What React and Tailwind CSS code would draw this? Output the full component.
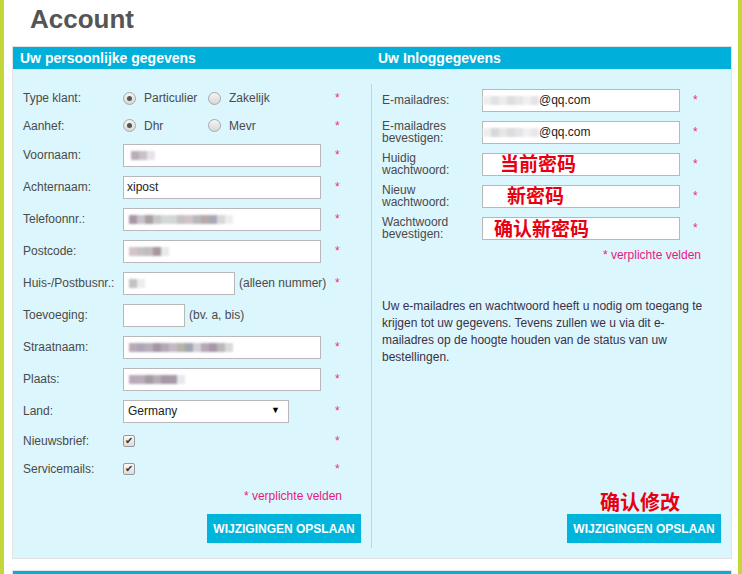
import React from "react";

const font = { fontFamily: '"Liberation Sans", Arial, sans-serif' };
const cjk = { fontFamily: '"Noto Sans CJK SC", "Liberation Sans", sans-serif' };

// pixelated/blurred stand-in for hidden personal data
const Blur = ({ colors, className = "" }) => (
  <div className={"flex items-center blur-[1px] " + className}>
    {colors.map((c, i) => (
      <div key={i} className="w-[8px] h-[9px]" style={{ background: c }} />
    ))}
  </div>
);

const Star = () => <span className="text-[#e8308a] text-[12px] leading-none">*</span>;

const Box = ({ w = "w-[198px]", children }) => (
  <div className={w + " h-[23px] bg-white border border-[#b8b8b8] flex items-center px-[3px] text-[12px] text-[#222]"}>
    {children}
  </div>
);

const Radio = ({ checked, label }) => (
  <div className="w-[85px] flex items-center gap-[8px]">
    <div className="w-[13px] h-[13px] rounded-full border border-[#a8a8a8] bg-gradient-to-b from-[#f4f4f4] to-[#d8d8d8] flex items-center justify-center">
      {checked && <div className="w-[5px] h-[5px] rounded-full bg-[#555]" />}
    </div>
    <span>{label}</span>
  </div>
);

const Check = () => (
  <div className="w-[12px] h-[12px] rounded-[2px] border border-[#999] bg-gradient-to-b from-[#fafafa] to-[#dcdcdc] flex items-center justify-center text-[10px] leading-none text-[#333]">
    ✔
  </div>
);

const Row = ({ label, h = "h-[32px]", star = true, children }) => (
  <div className={"flex items-center shrink-0 " + h}>
    <div className="w-[100px] shrink-0">{label}</div>
    <div className="w-[212px] shrink-0 flex items-center">{children}</div>
    {star && <Star />}
  </div>
);

const RRow = ({ label, children }) => (
  <div className="flex items-center h-[32px] shrink-0">
    <div className="w-[100px] shrink-0 leading-[12px]">{label}</div>
    <div className="w-[211px] shrink-0 flex items-center">{children}</div>
    <Star />
  </div>
);

const Red = ({ children, className = "" }) => (
  <span className={"text-[#e60012] font-bold text-[19px] leading-none whitespace-nowrap " + className} style={cjk}>
    {children}
  </span>
);

const Button = () => (
  <div className="h-[29px] w-[154px] bg-[#00b5dc] text-white font-bold text-[12px] flex items-center justify-center">
    WIJZIGINGEN OPSLAAN
  </div>
);

export default function App() {
  return (
    <div className="w-[742px] h-[574px] bg-white flex overflow-hidden text-[12px] text-[#4a4a4a]" style={font}>
      <div className="w-[4px] bg-[#c3d63a] shrink-0" />
      <div className="flex-1 flex flex-col">
        <div className="h-[46px] shrink-0 pt-[4px] pl-[26px] text-[26px] leading-[30px] font-bold text-[#555]">Account</div>

        <div className="shrink-0 ml-[8px] w-[720px] border border-[#e2e2e2] bg-[#dcf6fd]">
          <div className="h-[22px] bg-[#00b0da] flex items-center text-white font-bold text-[14px]">
            <div className="w-[358px] pl-[7px]">Uw persoonlijke gegevens</div>
            <div className="pl-[7px]">Uw Inloggegevens</div>
          </div>

          <div className="flex h-[489px]">
            {/* left column */}
            <div className="w-[358px] pl-[10px] pr-[10px] pt-[15px] pb-[15px] flex flex-col">
              <Row label="Type klant:" h="h-[28px]">
                <Radio checked label="Particulier" />
                <Radio label="Zakelijk" />
              </Row>
              <Row label="Aanhef:" h="h-[27px]">
                <Radio checked label="Dhr" />
                <Radio label="Mevr" />
              </Row>
              <Row label="Voornaam:">
                <Box>
                  <Blur className="ml-[4px]" colors={["#b9adba", "#c9c1ca", "#e6e3e8"]} />
                </Box>
              </Row>
              <Row label="Achternaam:">
                <Box>xipost</Box>
              </Row>
              <Row label="Telefoonnr.:">
                <Box>
                  <Blur className="ml-[2px]" colors={["#a995a8", "#c9c3c9", "#a89f9f", "#c9c6c9", "#d4d9d6", "#d2d7d4", "#c5c1c4", "#d4c3c6", "#b8b8ba", "#b8aaa8", "#a7a9b8", "#d8d8da", "#eeeeee"]} />
                </Box>
              </Row>
              <Row label="Postcode:">
                <Box>
                  <Blur className="ml-[2px]" colors={["#d4c4c8", "#c6c0c4", "#c1bcbe", "#a8989a", "#e8eaee"]} />
                </Box>
              </Row>
              <Row label="Huis-/Postbusnr.:">
                <Box w="w-[112px]">
                  <Blur className="ml-[2px]" colors={["#c4c0c4", "#ecebee"]} />
                </Box>
                <span className="ml-[4px] whitespace-nowrap">(alleen nummer)</span>
              </Row>
              <Row label="Toevoeging:" star={false}>
                <Box w="w-[62px]" />
                <span className="ml-[4px]">(bv. a, bis)</span>
              </Row>
              <Row label="Straatnaam:">
                <Box>
                  <Blur className="ml-[2px]" colors={["#bcaab6", "#aea6b8", "#b8b0b8", "#a496a6", "#b3a9b4", "#c2bbc6", "#b4b4aa", "#a0a6b2", "#d2d0d6", "#b8a8b6", "#a896a8", "#bab8b8", "#dadade"]} />
                </Box>
              </Row>
              <Row label="Plaats:">
                <Box>
                  <Blur className="ml-[2px]" colors={["#bca8bc", "#b8aeb8", "#a49aa0", "#b4aeb4", "#a896a4", "#a89aaa", "#e8e8ec"]} />
                </Box>
              </Row>
              <Row label="Land:">
                <div className="w-[166px] h-[23px] bg-white border border-[#b8b8b8] flex items-center justify-between pl-[4px] pr-[8px] text-[12px] text-[#222]">
                  <span>Germany</span>
                  <span className="text-[9px] text-black">▼</span>
                </div>
              </Row>
              <Row label="Nieuwsbrief:" h="h-[28px]">
                <Check />
              </Row>
              <Row label="Servicemails:" h="h-[28px]">
                <Check />
              </Row>
              <div className="mt-[6px] h-[14px] leading-[14px] text-right pr-[19px] text-[#e5197f]">* verplichte velden</div>
              <div className="mt-auto self-end">
                <Button />
              </div>
            </div>

            <div className="w-px bg-[#cfcfcf] mt-[15px] mb-[10px]" />

            {/* right column */}
            <div className="w-[359px] pl-[10px] pr-[10px] pt-[15px] pb-[15px] flex flex-col">
              <RRow label="E-mailadres:">
                <Box>
                  <Blur className="-ml-[3px]" colors={["#eeeeee", "#e2e2e2", "#ececec", "#dedede", "#e6e6e6", "#f0f0f0", "#e4e4e4"]} />
                  <span>@qq.com</span>
                </Box>
              </RRow>
              <RRow label={<>E-mailadres<br />bevestigen:</>}>
                <Box>
                  <Blur className="-ml-[3px]" colors={["#eeeeee", "#d8d8dc", "#e6e6e6", "#dcdce0", "#e4e4e8", "#f0f0f0", "#e8e8e8"]} />
                  <span>@qq.com</span>
                </Box>
              </RRow>
              <RRow label={<>Huidig<br />wachtwoord:</>}>
                <Box>
                  <Red className="ml-[14px] -mt-[3px]">当前密码</Red>
                </Box>
              </RRow>
              <RRow label={<>Nieuw<br />wachtwoord:</>}>
                <Box>
                  <Red className="ml-[21px] -mt-[3px]">新密码</Red>
                </Box>
              </RRow>
              <RRow label={<>Wachtwoord<br />bevestigen:</>}>
                <Box>
                  <Red className="ml-[8px] -mt-[1px]">确认新密码</Red>
                </Box>
              </RRow>
              <div className="mt-[4px] h-[14px] leading-[14px] text-right pr-[20px] text-[#e5197f]">* verplichte velden</div>
              <p className="mt-[36px] w-[334px] leading-[17px] text-[#3a3048]">
                Uw e-mailadres en wachtwoord heeft u nodig om toegang te krijgen tot uw gegevens. Tevens zullen we u via dit e-mailadres op de hoogte houden van de status van uw bestellingen.
              </p>
              <div className="mt-auto self-end flex flex-col items-center">
                <Red className="text-[20px] leading-[24px] mr-[8px]">确认修改</Red>
                <div className="mt-[2px]">
                  <Button />
                </div>
              </div>
            </div>
          </div>
        </div>

        <div className="shrink-0 mt-[11px] ml-[8px] w-[720px] border-t border-x border-[#e2e2e2] h-[10px] bg-[#00b0da]" />
      </div>
      <div className="w-[4px] bg-[#c3d63a] shrink-0" />
    </div>
  );
}
